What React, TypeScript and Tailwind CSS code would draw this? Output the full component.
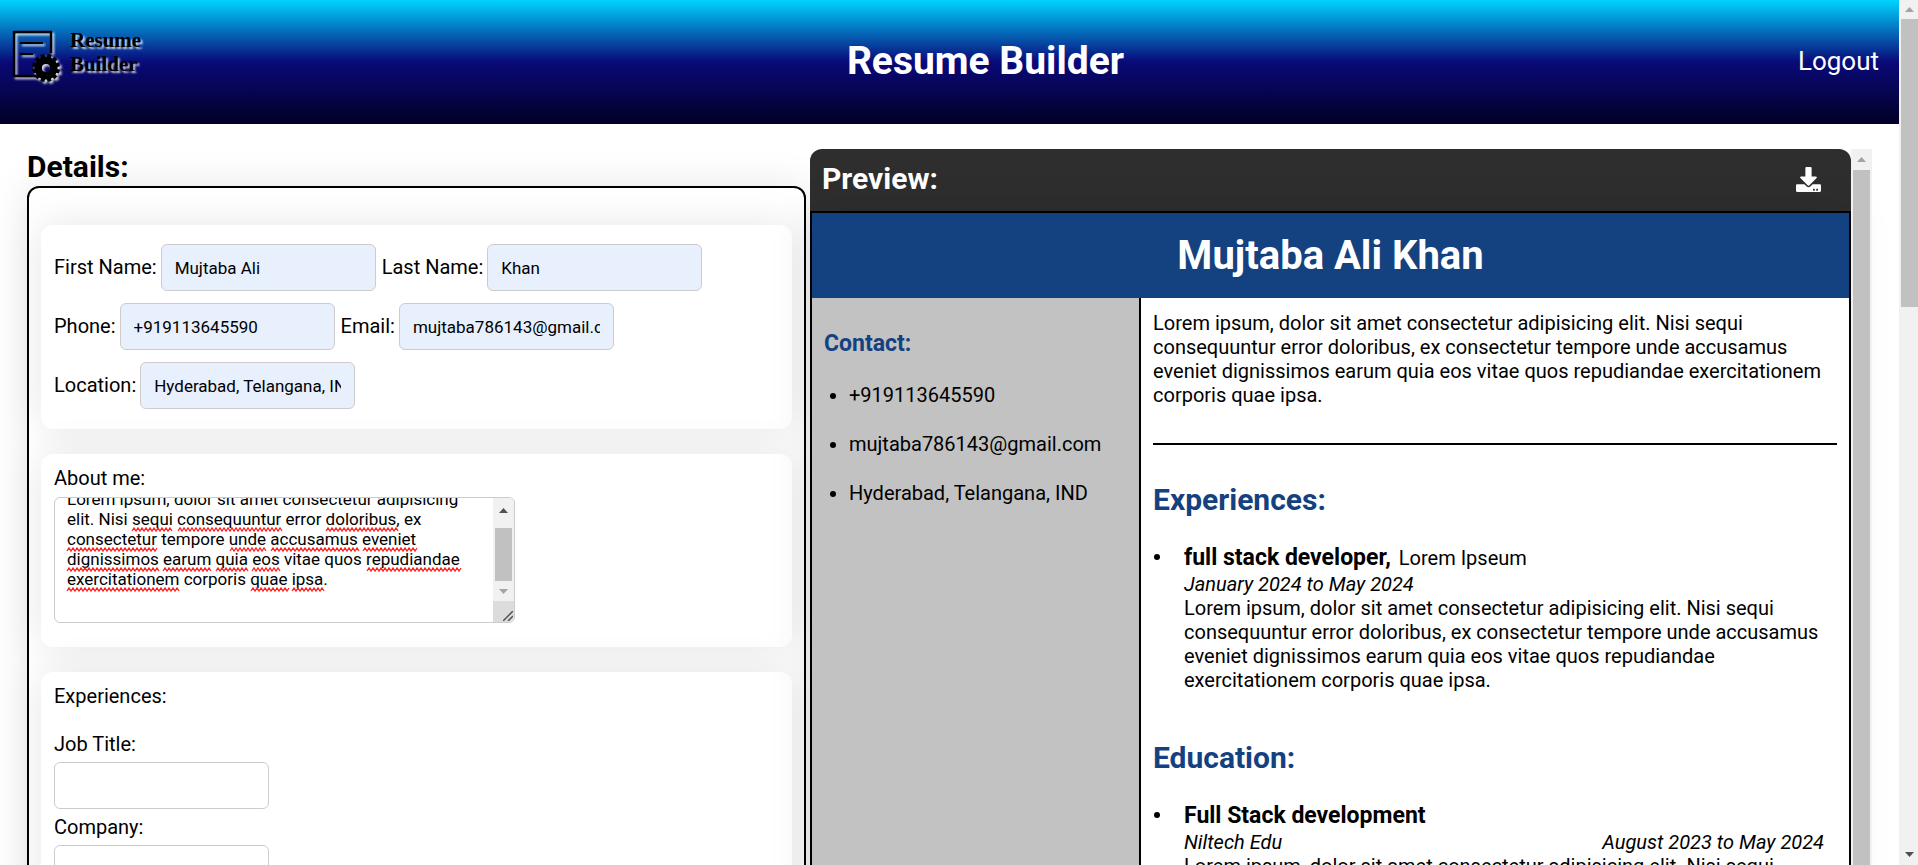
import type { ReactNode } from "react";
import { FaDownload } from "react-icons/fa";

const LOREM =
  "Lorem ipsum, dolor sit amet consectetur adipisicing elit. Nisi sequi consequuntur error doloribus, ex consectetur tempore unde accusamus eveniet dignissimos earum quia eos vitae quos repudiandae exercitationem corporis quae ipsa.";

/* Misspelled words in the text area: [line, start, end] */
const SQUIGGLES: [number, number, number][] = [
  [1, 77, 118], [1, 123, 227], [1, 271, 343],
  [2, 12, 102], [2, 175, 212], [2, 216, 304], [2, 308, 362],
  [3, 12, 104], [3, 108, 157], [3, 161, 194], [3, 197, 225], [3, 312, 406],
  [4, 12, 124], [4, 196, 234], [4, 237, 269],
];

function squigglePath(line: number, start: number, end: number) {
  const y = 10 + line * 20;
  let d = `M${start} ${y + 3}`;
  for (let x = start + 2, up = true; x <= end; x += 2, up = !up) {
    d += `L${x} ${up ? y : y + 3}`;
  }
  return d;
}

function Logo() {
  const teeth = Array.from({ length: 12 }, (_, i) => i * 30);
  return (
    <a href="#" aria-label="Resume Builder home" className="flex w-[161px] items-center gap-2 pb-[10px] text-black">
      <svg
        viewBox="0 0 50 54"
        className="h-[54px] w-[50px] drop-shadow-[2px_2px_1px_rgba(255,255,255,0.85)]"
        aria-hidden="true"
      >
        <path d="M39 24V3H2v44h32" fill="none" stroke="#000" strokeWidth="2.4" />
        <path d="M8 14h23M8 25h13" fill="none" stroke="#000" strokeWidth="2" />
        <g transform="translate(34 39)">
          {teeth.map((a) => (
            <rect key={a} x="-2" y="-14" width="4" height="6" transform={`rotate(${a + 15})`} />
          ))}
          <circle r="7.8" fill="none" stroke="#000" strokeWidth="7.4" />
        </g>
      </svg>
      <span className="-mt-2 font-['Liberation_Serif',serif] text-[21px] leading-6 font-bold [text-shadow:2px_2px_2px_rgba(255,255,255,0.8)]">
        Resume
        <br />
        Builder
      </span>
    </a>
  );
}

function Arrow({ down = false, dark = false }: { down?: boolean; dark?: boolean }) {
  return (
    <svg viewBox="0 0 9 5" className={dark ? "h-[5px] w-[9px] fill-[#505050]" : "h-[5px] w-[9px] fill-[#a3a3a3]"} aria-hidden="true">
      <path d={down ? "M0 0h9L4.500 5z" : "M0 5h9L4.500 0z"} />
    </svg>
  );
}

function Card({ children, className }: { children: ReactNode; className: string }) {
  return (
    <section className={`rounded-xl bg-white px-[13px] shadow-[0_0_40px_rgba(0,0,0,0.1)] ${className}`}>
      {children}
    </section>
  );
}

function Field({ id, label, value, stacked = false }: { id: string; label: string; value?: string; stacked?: boolean }) {
  return (
    <div className={stacked ? "flex flex-col items-start gap-[6px]" : "flex items-baseline gap-1"}>
      <label htmlFor={id}>{label}</label>
      <input
        id={id}
        defaultValue={value}
        className={`h-[47px] w-[215px] rounded-md border border-[#ccc] px-[13px] text-[17px] ${value ? "bg-[#e8f0fe]" : "bg-white"}`}
      />
    </div>
  );
}

function AboutBox() {
  return (
    <div className="relative flex h-[126px] w-[461px] max-w-full overflow-hidden rounded-md border border-[#ccc]">
      <textarea
        id="about"
        spellCheck={false}
        ref={(el) => {
          if (el) el.scrollTop = el.scrollHeight;
        }}
        defaultValue={LOREM + "\n"}
        className="min-w-0 flex-1 resize-none overflow-hidden py-[13px] pr-[10px] pl-3 text-[17px] leading-5 outline-none"
      />
      <svg className="pointer-events-none absolute inset-0 h-full w-full" aria-hidden="true">
        {SQUIGGLES.map(([line, s, e]) => (
          <path key={`${line}-${s}`} d={squigglePath(line, s, e)} fill="none" stroke="#ff2020" strokeWidth="1.3" />
        ))}
      </svg>
      <div className="flex w-[21px] flex-col bg-[#f1f1f1]" aria-hidden="true">
        <div className="flex h-[30px] items-center justify-center pb-[6px]">
          <Arrow dark />
        </div>
        <div className="mx-[2px] h-[53px] bg-[#c1c1c1]" />
        <div className="flex flex-1 items-center justify-center">
          <Arrow down />
        </div>
        <div className="flex h-[21px] items-end justify-end bg-[#dcdcdc] p-px">
          <svg viewBox="0 0 10 10" className="size-[10px]">
            <path d="M0 10L10 0M5 10l5-5" stroke="#505050" strokeWidth="1.5" />
          </svg>
        </div>
      </div>
    </div>
  );
}

function DetailsForm() {
  return (
    <div>
      <h2 className="mb-px text-[30px] leading-9 font-bold">Details:</h2>
      <form className="flex flex-col gap-[25px] rounded-xl border-2 border-black px-3 pt-[37px] pb-[25px] shadow-[0_0_40px_rgba(0,0,0,0.1)]">
        <Card className="flex flex-col gap-3 pt-[19px] pb-5">
          <div className="flex flex-wrap gap-[6px]">
            <Field id="first" label="First Name:" value="Mujtaba Ali" />
            <Field id="last" label="Last Name:" value="Khan" />
          </div>
          <div className="flex flex-wrap gap-[6px]">
            <Field id="phone" label="Phone:" value="+919113645590" />
            <Field id="email" label="Email:" value="mujtaba786143@gmail.com" />
          </div>
          <Field id="location" label="Location:" value="Hyderabad, Telangana, IND" />
        </Card>
        <Card className="flex flex-col items-start gap-[7px] pt-3 pb-6">
          <label htmlFor="about">About me:</label>
          <AboutBox />
        </Card>
        <Card className="flex flex-col gap-[6px] pt-3 pb-6">
          <h3 className="mb-[18px]">Experiences:</h3>
          <Field id="job" label="Job Title:" stacked />
          <Field id="company" label="Company:" stacked />
        </Card>
      </form>
    </div>
  );
}

function Entry({ title, aside, left, right }: { title: string; aside?: string; left: string; right?: string }) {
  return (
    <li className="mt-[26px] pr-[13px] pl-[11px]">
      <div className="inline-flex items-baseline gap-2 align-top leading-7">
        <strong className="text-[23px] font-bold">{title}</strong>
        {aside && <span>{aside}</span>}
      </div>
      <div className="flex justify-between italic">
        <span>{left}</span>
        {right && <span>{right}</span>}
      </div>
      <p>{LOREM}</p>
    </li>
  );
}

function Preview() {
  return (
    <div className="flex">
      <div className="flex min-w-0 flex-1 flex-col">
        <div className="flex h-[62px] items-center justify-between rounded-t-xl bg-[#2e2e2e] pr-[30px] pb-[2px] pl-3 text-white">
          <h2 className="text-[30px] leading-9 font-bold">Preview:</h2>
          <button type="button" aria-label="Download resume">
            <FaDownload className="size-[25px]" />
          </button>
        </div>
        <article className="flex flex-1 flex-col border-2 border-black shadow-[0_0_40px_rgba(0,0,0,0.1)]">
          <h1 className="flex h-[85px] items-center justify-center bg-[#14417f] text-[40px] font-bold text-white">
            Mujtaba Ali Khan
          </h1>
          <div className="grid flex-1 grid-cols-[329fr_708fr]">
            <aside className="border-r-2 border-black bg-[#c2c2c2] px-3 pt-8">
              <h3 className="text-[23px] leading-7 font-bold text-[#14417f]">Contact:</h3>
              <ul className="mt-[25px] flex list-disc flex-col gap-[25px] pl-[25px]">
                <li>+919113645590</li>
                <li>mujtaba786143@gmail.com</li>
                <li>Hyderabad, Telangana, IND</li>
              </ul>
            </aside>
            <div className="px-3 pt-[13px] pb-12">
              <p>{LOREM}</p>
              <hr className="mt-9 border-t-2 border-black" />
              <h2 className="mt-[37px] text-[30px] leading-9 font-bold text-[#14417f]">Experiences:</h2>
              <ul className="list-disc pl-5">
                <Entry title="full stack developer," aside="Lorem Ipseum" left="January 2024 to May 2024" />
              </ul>
              <h2 className="mt-12 text-[30px] leading-9 font-bold text-[#14417f]">Education:</h2>
              <ul className="list-disc pl-5">
                <Entry title="Full Stack development" left="Niltech Edu" right="August 2023 to May 2024" />
              </ul>
            </div>
          </div>
        </article>
      </div>
      <div className="flex w-[21px] flex-col items-center bg-[#f1f1f1]" aria-hidden="true">
        <div className="flex h-[21px] items-center">
          <Arrow />
        </div>
        <div className="w-[17px] flex-1 bg-[#c1c1c1]" />
      </div>
    </div>
  );
}

export default function App() {
  return (
    <div className="flex h-screen overflow-hidden bg-white font-[Roboto,sans-serif] text-[20px] leading-6 text-black">
      <div className="min-w-0 flex-1 overflow-hidden">
        <header className="flex h-[124px] items-center justify-between bg-[linear-gradient(0deg,#020024_0%,#090979_50%,#00d4ff_100%)] pr-5 pb-[2px] pl-3">
          <Logo />
          <h1 className="text-[39px] leading-none font-bold text-white">Resume Builder</h1>
          <a href="#logout" className="text-[26px] text-white">
            Logout
          </a>
        </header>
        <main className="grid grid-cols-[779fr_1062fr] gap-1 px-[27px] pt-[25px]">
          <DetailsForm />
          <Preview />
        </main>
      </div>
      <div className="flex w-[19px] flex-col items-center bg-[#f1f1f1] pl-[2px]" aria-hidden="true">
        <div className="flex h-[19px] items-center">
          <Arrow />
        </div>
        <div className="h-1/3 w-full bg-[#c1c1c1]" />
        <div className="flex flex-1 items-end pb-2">
          <Arrow down dark />
        </div>
      </div>
    </div>
  );
}
